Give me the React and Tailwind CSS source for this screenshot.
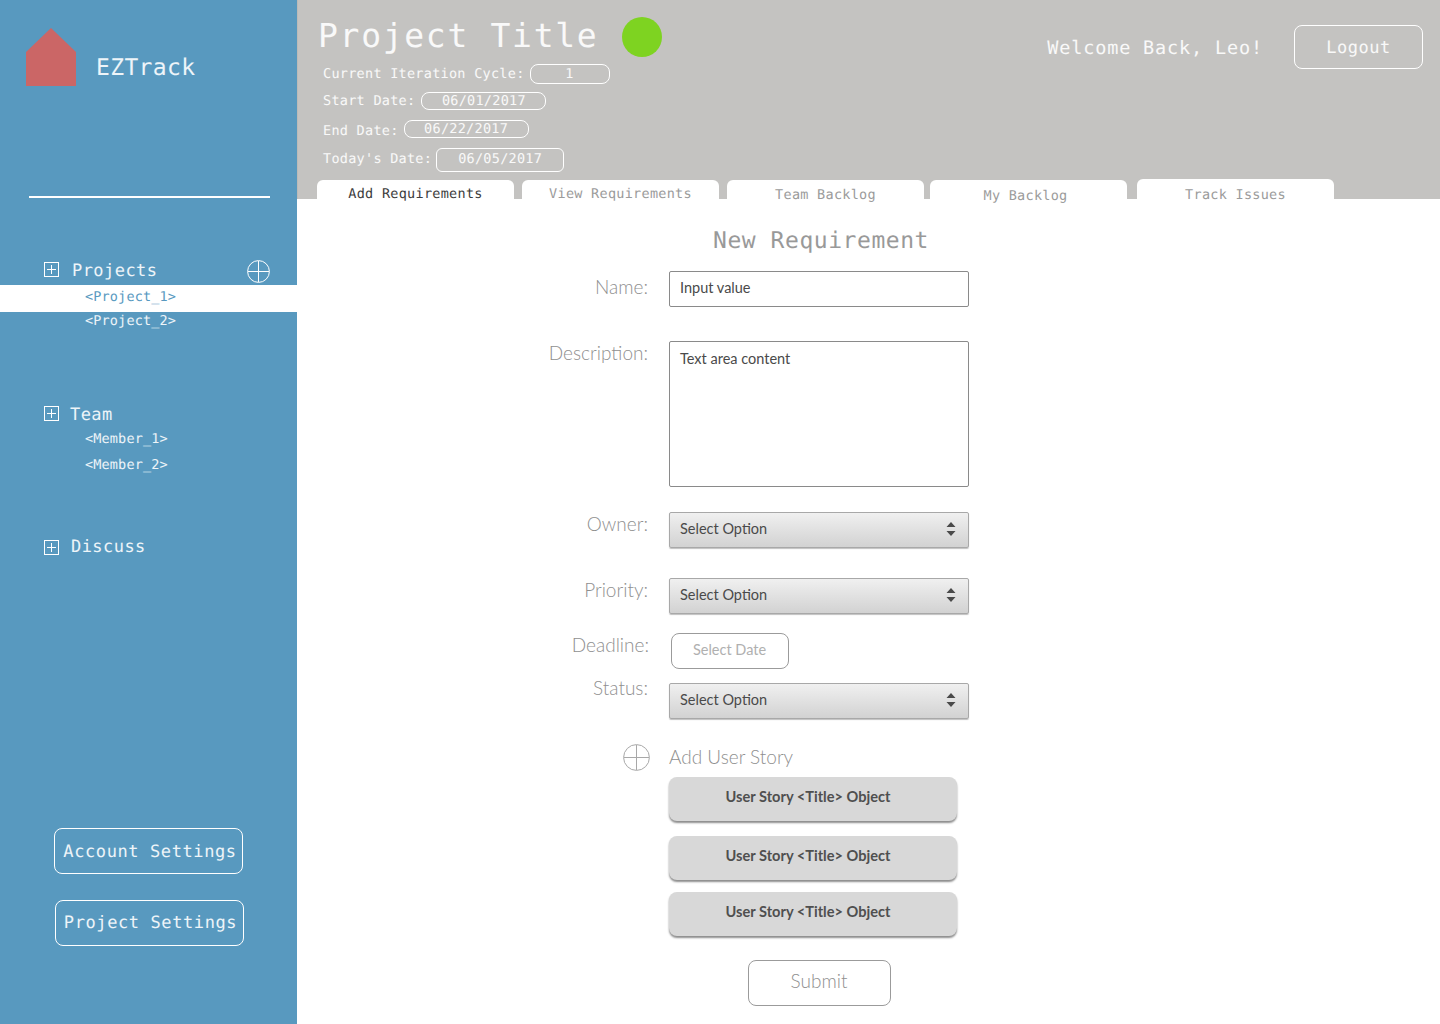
import React from 'react';

const mono = "font-['DejaVu_Sans_Mono',monospace] [text-rendering:geometricPrecision]";

const PlusBox = () => (
  <svg width="15" height="15" viewBox="0 0 15 15" className="shrink-0 mb-[3px]">
    <rect x="0.5" y="0.5" width="14" height="14" fill="none" stroke="#fff" />
    <path d="M7.5 3v9M3 7.5h9" stroke="#fff" />
  </svg>
);

const PlusCircle = ({ size, color }) => (
  <svg width={size} height={size} viewBox={`0 0 ${size} ${size}`} className="shrink-0">
    <circle cx={size / 2} cy={size / 2} r={size / 2 - 0.6} fill="none" stroke={color} strokeWidth="1" />
    <path d={`M${size / 2} 1V${size - 1}M1 ${size / 2}H${size - 1}`} stroke={color} strokeWidth="1" />
  </svg>
);

const Updown = () => (
  <svg width="10" height="16" viewBox="0 0 10 16">
    <path d="M5 1l4.5 5h-9zM5 15L.5 10h9z" fill="#4a4a4a" />
  </svg>
);

const Sidebar = () => (
  <aside className={`w-[297px] shrink-0 h-[1024px] bg-[#5899bf] flex flex-col text-white/90 ${mono}`}>
    <div className="flex items-start pl-[26px] pt-[28px] h-[86px]">
      <svg width="50" height="58" viewBox="0 0 50 58" className="shrink-0">
        <path d="M25 0L50 24V58H0V24Z" fill="#cb6666" />
      </svg>
      <span className="ml-[20px] mt-[28px] text-[23px] tracking-[.35px] leading-[24px]">EZTrack</span>
    </div>
    <div className="ml-[29px] w-[241px] h-[2px] bg-white mt-[110px]" />

    <div className="mt-[61px] mb-[2px] h-[24px] flex items-center pl-[44px] pr-[27px]">
      <PlusBox />
      <span className="ml-[13px] mt-[2px] text-[17px] tracking-[.45px]">Projects</span>
      <span className="ml-auto"><PlusCircle size={23} color="#fff" /></span>
    </div>
    <div className="h-[27px] bg-white text-[#5899bf] pl-[85px] text-[13.5px] tracking-[.15px] leading-[25px]">&lt;Project_1&gt;</div>
    <div className="h-[17px] pl-[85px] text-[13.5px] tracking-[.15px] leading-[19px]">&lt;Project_2&gt;</div>

    <div className="mt-[73px] h-[26px] flex items-center pl-[44px]">
      <PlusBox />
      <span className="ml-[11px] mt-[2px] text-[17px] tracking-[.45px]">Team</span>
    </div>
    <div className="h-[24px] mt-[-1px] pl-[85px] text-[13.5px] tracking-[.15px] leading-[24px]">&lt;Member_1&gt;</div>
    <div className="h-[26px] mt-[1px] pl-[85px] text-[13.5px] tracking-[.15px] leading-[26px]">&lt;Member_2&gt;</div>

    <div className="mt-[58px] h-[26px] flex items-center pl-[44px]">
      <PlusBox />
      <span className="ml-[12px] mb-[2px] text-[17px] tracking-[.45px]">Discuss</span>
    </div>

    <div className="mt-[266px] ml-[54px] w-[189px] h-[46px] border border-white rounded-[8px] flex items-center justify-center pt-[4px] pl-[3px] text-[17px] tracking-[.6px]">Account Settings</div>
    <div className="mt-[26px] ml-[55px] w-[189px] h-[46px] border border-white rounded-[8px] flex items-center justify-center pt-[2px] pl-[2px] text-[17px] tracking-[.6px]">Project Settings</div>
  </aside>
);

const Pill = ({ className, children }) => (
  <span className={`border border-white flex items-center justify-center text-[13.5px] tracking-[.27px] ${className}`}>{children}</span>
);

const tabs = [
  { label: 'Add Requirements', box: 'ml-[19px] mt-[1px] h-[19px]', text: 'text-[#3c3c3c] leading-[29px]' },
  { label: 'View Requirements', box: 'ml-[8px] mt-[1px] h-[19px]', text: 'text-[#9b9b9b] leading-[29px]' },
  { label: 'Team Backlog', box: 'ml-[8px] mt-[1px] h-[19px]', text: 'text-[#9b9b9b] leading-[31px]' },
  { label: 'My Backlog', box: 'ml-[6px] mt-[1px] h-[19px] pr-[6px]', text: 'text-[#9b9b9b] leading-[33px]' },
  { label: 'Track Issues', box: 'ml-[10px] h-[20px]', text: 'text-[#9b9b9b] leading-[32px]' },
];

const Header = () => (
  <header className={`h-[199px] bg-[#c4c3c1] text-white/90 relative border-l border-[#bcbbb8] ${mono}`}>
    <div className="flex items-center pl-[20px] pt-[17px] h-[57px]">
      <span className="text-[33px] tracking-[1.7px] leading-none mt-[-4px]">Project Title</span>
      <span className="ml-[24px] w-[40px] h-[40px] rounded-full bg-[#7ed321]" />
    </div>
    <div className="flex items-center h-[20px] mt-[7px] pl-[25px] text-[13.5px] tracking-[.27px]">
      Current Iteration Cycle:
      <Pill className="ml-[5px] w-[80px] h-[20px] rounded-[8px]">1</Pill>
    </div>
    <div className="flex items-center h-[18px] mt-[8px] pl-[25px] text-[13.5px] tracking-[.27px]">
      Start Date:
      <Pill className="ml-[6px] w-[125px] h-[18px] rounded-[8px]">06/01/2017</Pill>
    </div>
    <div className="flex items-center h-[18px] mt-[10px] pl-[25px] text-[13.5px] tracking-[.27px]">
      <span className="mt-[4px]">End Date:</span>
      <Pill className="ml-[5px] w-[125px] h-[18px] rounded-[8px]">06/22/2017</Pill>
    </div>
    <div className="flex items-center h-[24px] mt-[10px] pl-[25px] text-[13.5px] tracking-[.27px]">
      <span className="mb-[2px]">Today's Date:</span>
      <Pill className="ml-[4px] w-[128px] h-[24px] rounded-[6px] pb-[2px]">06/05/2017</Pill>
    </div>
    <div className="flex mt-[7px]">
      {tabs.map((t) => (
        <div key={t.label} className={`${t.box} w-[197px] bg-white rounded-t-[6px] text-center text-[13.5px] tracking-[.27px] ${t.text}`}>{t.label}</div>
      ))}
    </div>
    <div className="absolute right-[17px] top-[25px] flex items-center">
      <span className="text-[18.5px] tracking-[.85px] mr-[31px] pt-[4px]">Welcome Back, Leo!</span>
      <span className="w-[129px] h-[44px] border border-white rounded-[8px] flex items-center justify-center pt-[4px] text-[17px] tracking-[.5px]">Logout</span>
    </div>
  </header>
);

const Row = ({ label, labelClass = '', className = '', children }) => (
  <div className={`flex ${className}`}>
    <div className={`w-[350px] shrink-0 text-right text-[19px] font-light leading-[24px] text-[#8f8f8f] ${labelClass}`}>{label}</div>
    {children}
  </div>
);

const Select = () => (
  <div className="ml-[21px] w-[300px] h-[36px] rounded-[2px] border border-[#a8a8a8] bg-gradient-to-b from-[#f0f0f0] to-[#d2d2d2] shadow-[0_1px_1px_rgba(0,0,0,.25)] flex items-center justify-between pl-[10px] pr-[12px] pb-[2px] text-[14.5px] text-[#4a4a4a]">
    Select Option
    <Updown />
  </div>
);

const Story = ({ className }) => (
  <div className={`ml-[371px] w-[288px] h-[44px] rounded-[8px] bg-[#d8d8d8] shadow-[0_2px_2px_rgba(0,0,0,.45)] flex items-center justify-center text-[14.6px] font-bold text-[#4f4f4f] pb-[5px] pr-[10px] ${className}`}>
    User Story &lt;Title&gt; Object
  </div>
);

const Form = () => (
  <main className="font-['Lato',sans-serif] pl-[1px]">
    <h1 className={`${mono} text-[23px] tracking-[.55px] text-[#999] font-normal text-center w-[1046px] h-[30px] leading-[30px] mt-[27px]`}>New Requirement</h1>
    <Row label="Name:" className="mt-[15px]" labelClass="mt-[4px]">
      <div className="ml-[21px] w-[300px] h-[36px] border border-[#8a8a8a] rounded-[2px] flex items-center pl-[10px] text-[14.5px] text-[#4a4a4a] pb-[3px]">Input value</div>
    </Row>
    <Row label="Description:" className="mt-[34px]">
      <div className="ml-[21px] w-[300px] h-[146px] border border-[#8a8a8a] rounded-[2px] pl-[10px] pt-[7px] text-[14.5px] leading-[20px] text-[#4a4a4a]">Text area content</div>
    </Row>
    <Row label="Owner:" className="mt-[25px]"><Select /></Row>
    <Row label="Priority:" className="mt-[30px]"><Select /></Row>
    <Row label="Deadline:" className="mt-[19px]" labelClass="translate-x-[1px]">
      <div className="ml-[23px] w-[118px] h-[36px] border border-[#9b9b9b] rounded-[8px] flex items-center justify-center text-[14.5px] text-[#b0b0b0] pb-[2px] pr-[1px]">Select Date</div>
    </Row>
    <Row label="Status:" className="mt-[14px]" labelClass="mt-[-7px] h-[17px]"><Select /></Row>
    <div className="flex items-center mt-[25px] h-[26px]">
      <span className="ml-[325px]"><PlusCircle size={27} color="#a8a8a8" /></span>
      <span className="ml-[19px] text-[19px] font-light text-[#8f8f8f]">Add User Story</span>
    </div>
    <Story className="mt-[7px]" />
    <Story className="mt-[15px]" />
    <Story className="mt-[12px]" />
    <div className="mt-[24px] ml-[450px] w-[143px] h-[46px] border border-[#9b9b9b] rounded-[8px] flex items-center justify-center text-[19px] font-light text-[#8f8f8f] pb-[3px] pr-[1px]">Submit</div>
  </main>
);

export default function App() {
  return (
    <div className="flex w-[1440px] h-[1024px] overflow-hidden bg-white">
      <Sidebar />
      <div className="flex-1 min-w-0">
        <Header />
        <Form />
      </div>
    </div>
  );
}
